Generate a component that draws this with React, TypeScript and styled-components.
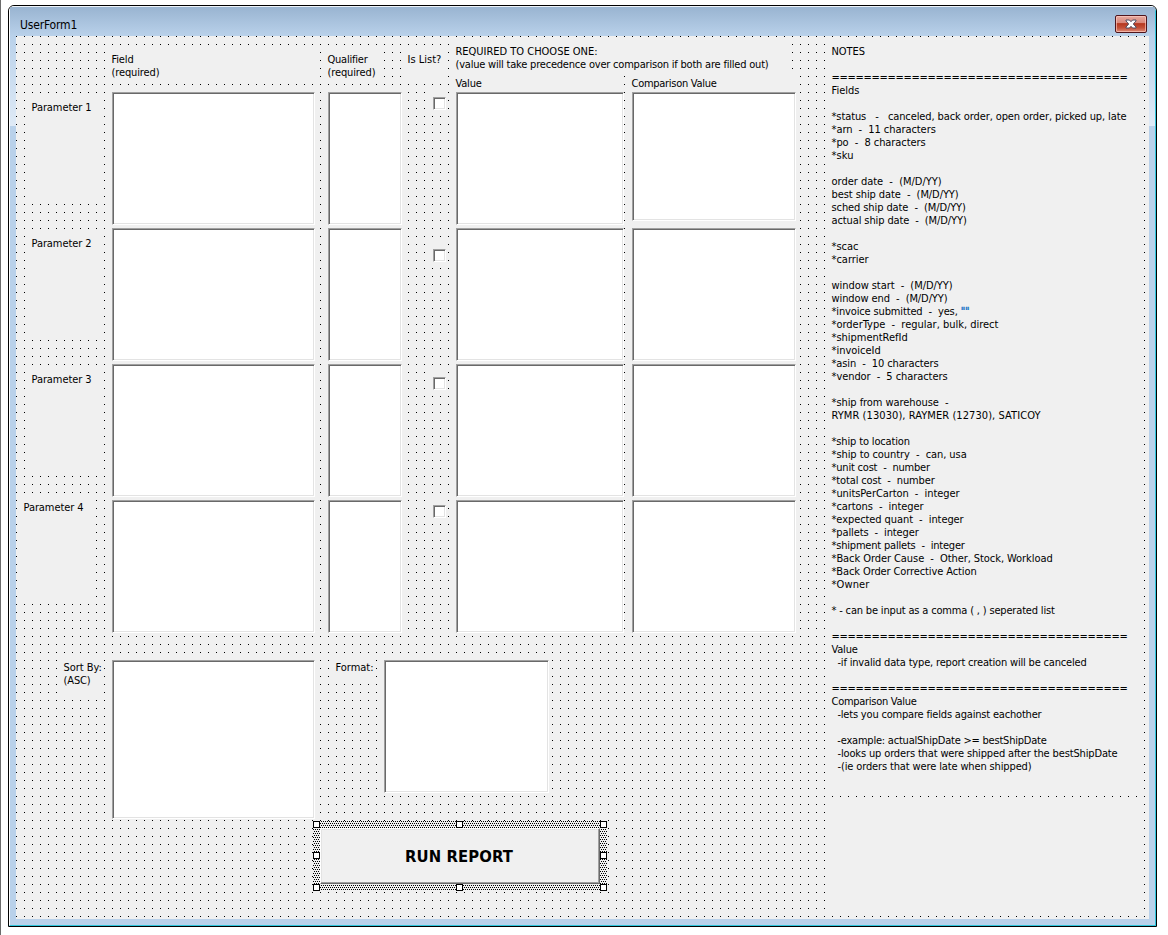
import React from "react";
import styled, { createGlobalStyle, css } from "styled-components";

const face = "#f0f0f0";
const frameBlue = "#b9d1ea";
const uiFont = '"DejaVu Sans Condensed", "DejaVu Sans", Tahoma, sans-serif';

const GlobalStyle = createGlobalStyle`
  *, *::before, *::after { box-sizing: border-box; }
  body { margin: 0; background: #fff; color: #000; font: 11px/13px ${uiFont}; }
`;

/* ---------- window chrome ---------- */

const Desktop = styled.main`
  display: flex;
  width: 1168px;
  height: 935px;
  padding: 5px 0 0 7px;
  border-left: 1px solid #6b6b6b;
`;

const WindowFrame = styled.section`
  width: 1149px;
  height: 922px;
  border: 1px solid #000;
  border-radius: 6px 6px 0 0;
  overflow: hidden;
`;

const WindowBevel = styled.div`
  display: flex;
  flex-direction: column;
  height: 100%;
  border: 1px solid;
  border-color: #eef4fa #2fc6dc #2fc6dc #fff;
  border-radius: 5px 5px 0 0;
  background: ${frameBlue};
`;

const TitleBar = styled.header`
  display: flex;
  justify-content: space-between;
  align-items: flex-start;
  flex: none;
  height: 29px;
  padding: 8px 8px 0 10px;
  background: linear-gradient(#99b4d1, ${frameBlue});
`;

const Title = styled.h1`
  margin: 3px 0 0;
  font-size: 12px;
  line-height: 14px;
  font-weight: 400;
  letter-spacing: -0.16px;
`;

const CloseButton = styled.button`
  display: grid;
  place-items: center;
  width: 32px;
  height: 18px;
  padding: 0;
  border: 1px solid #4f161d;
  border-radius: 2px;
  box-shadow: inset 0 0 0 1px rgba(255, 205, 195, 0.65);
  background: linear-gradient(#e5a99f 0, #d98578 46%, #b5371f 47%, #c4523a 75%, #de8d7a 100%);
`;

const FrameBody = styled.div`
  flex: 1;
  padding: 0 6px 6px;
  background: linear-gradient(${frameBlue}, #dfeaf6) 0 0 / 100% 90px no-repeat, ${frameBlue};
`;

/* ---------- design surface ---------- */

const Surface = styled.div`
  display: flex;
  height: 883px;
  background-color: ${face};
  background-image: linear-gradient(90deg, transparent 1px, ${face} 1px),
    linear-gradient(#000 1px, ${face} 1px);
  background-size: 8px 8px;
`;

const ControlsColumn = styled.div`
  width: 816px;
`;

const columns = css`
  display: grid;
  grid-template-columns: 96px 216px 80px 48px 176px 164px;
  justify-items: start;
  align-items: start;
`;

const HeaderRow = styled.div`
  ${columns}
  grid-template-rows: 32px 16px;
  padding-top: 8px;
`;

const ParameterRow = styled.div`
  ${columns}
  height: 136px;
`;

const Caption = styled.label<{ $w: number; $h: number; $top?: number; $left?: number }>`
  display: block;
  width: ${(p) => p.$w}px;
  height: ${(p) => p.$h}px;
  margin: ${(p) => p.$top ?? 0}px 0 0 ${(p) => p.$left ?? 0}px;
  padding-top: 1px;
  background: ${face};
`;

const TallCaption = styled(Caption)<{ $col: number }>`
  grid-area: 1 / ${(p) => p.$col} / 3;
`;

const RequirementCaption = styled(Caption)`
  grid-area: 1 / 5 / 2 / 7;
`;

const ColumnCaption = styled(Caption)<{ $col: number }>`
  grid-area: 2 / ${(p) => p.$col};
`;

const TextLine = styled.span<{ $track?: number }>`
  display: block;
  height: 13px;
  margin-left: -0.5px;
  white-space: pre;
  letter-spacing: ${(p) => p.$track ?? -0.08}px;
`;

const ListBox = styled.div<{ $w: number; $h?: number }>`
  flex: none;
  width: ${(p) => p.$w}px;
  height: ${(p) => p.$h ?? 133}px;
  border: 1px solid;
  border-color: #a0a0a0 #fff #fff #a0a0a0;
  box-shadow: inset 1px 1px 0 #696969, inset -1px -1px 0 #e3e3e3;
  background: #fff;
`;

const CheckControl = styled.div<{ $top: number }>`
  width: 16px;
  height: 24px;
  margin: ${(p) => p.$top}px 0 0 24px;
  padding: 5px 0 0 1px;
  background: ${face};
`;

const CheckSquare = styled.div`
  width: 13px;
  height: 13px;
  border: 1px solid;
  border-color: #a0a0a0 #fff #fff #a0a0a0;
  box-shadow: inset 1px 1px 0 #696969, inset -1px -1px 0 #e3e3e3;
  background: #fff;
`;

const OptionsRow = styled.div`
  display: flex;
  align-items: flex-start;
  height: 159px;
  margin-top: 24px;
  padding-left: 48px;
`;

const ListSlot = styled.div`
  margin-left: 8px;
`;

/* ---------- selected command button ---------- */

const stipple = "conic-gradient(from 0deg at 1px 1px, transparent 270deg, #000 270deg)";

const Selection = styled.div`
  position: relative;
  width: 294px;
  height: 70px;
  margin: 2px 0 0 297px;
  padding: 7px;
  background: ${stipple} 0 0 / 2px 4px, ${stipple} 1px 2px / 2px 4px, ${face};
`;

const RunButton = styled.button`
  display: grid;
  place-items: center;
  width: 280px;
  height: 56px;
  padding: 2px 2px 0 0;
  border: 1px solid;
  border-color: #fff #696969 #696969 #fff;
  box-shadow: inset -1px -1px 0 #a0a0a0, inset 1px 1px 0 #e3e3e3;
  background: ${face};
  color: #000;
  font: 700 16.5px/20px ${uiFont};
  letter-spacing: 0.12px;
`;

const Handle = styled.i<{ $x: number; $y: number }>`
  position: absolute;
  left: ${(p) => p.$x}px;
  top: ${(p) => p.$y}px;
  width: 7px;
  height: 7px;
  border: 1px solid #000;
  background: #fff;
`;

/* ---------- notes ---------- */

const NotesColumn = styled.aside`
  display: flex;
  flex-direction: column;
  gap: 4px;
  width: 312px;
  padding-top: 8px;
`;

const NotesPanel = styled.div`
  height: 752px;
  padding-top: 1px;
  background: ${face};
`;

const EmptyPanel = styled.div`
  height: 112px;
  background: ${face};
`;

const Quotes = styled.span`
  color: #1b78c8;
  -webkit-text-stroke: 0.4px #1b78c8;
`;

type Note = [text: string, track?: number];

const rule: Note = ["=====================================", -0.293];
const blank: Note = [""];

const notes: Note[] = [
  ["NOTES", -0.05],
  blank,
  rule,
  ["Fields", 0.01],
  blank,
  ["*status   -   canceled, back order, open order, picked up, late", -0.1],
  ["*arn  -  11 characters", -0.06],
  ["*po  -  8 characters", -0.06],
  ["*sku", 0.1],
  blank,
  ["order date  -  (M/D/YY)", -0.02],
  ["best ship date  -  (M/D/YY)", -0.08],
  ["sched ship date  -  (M/D/YY)", -0.1],
  ["actual ship date  -  (M/D/YY)", -0.11],
  blank,
  ["*scac", 0],
  ["*carrier", -0.02],
  blank,
  ["window start  -  (M/D/YY)", -0.06],
  ["window end  -  (M/D/YY)", -0.09],
  ['*invoice submitted  -  yes, ""', -0.14],
  ["*orderType  -  regular, bulk, direct", -0.01],
  ["*shipmentRefId", -0.02],
  ["*invoiceId", -0.02],
  ["*asin  -  10 characters", -0.11],
  ["*vendor  -  5 characters", -0.07],
  blank,
  ["*ship from warehouse  -", -0.065],
  ["RYMR (13030), RAYMER (12730), SATICOY", 0.07],
  blank,
  ["*ship to location", -0.15],
  ["*ship to country  -  can, usa", -0.07],
  ["*unit cost  -  number", -0.2],
  ["*total cost  -  number", -0.13],
  ["*unitsPerCarton  -  integer", -0.07],
  ["*cartons  -  integer", -0.07],
  ["*expected quant  -  integer", -0.08],
  ["*pallets  -  integer", -0.12],
  ["*shipment pallets  -  integer", -0.2],
  ["*Back Order Cause  -  Other, Stock, Workload", -0.07],
  ["*Back Order Corrective Action", -0.11],
  ["*Owner", 0.1],
  blank,
  ["* - can be input as a comma ( , ) seperated list", -0.17],
  blank,
  rule,
  ["Value", -0.2],
  ["  -if invalid data type, report creation will be canceled", -0.177],
  blank,
  rule,
  ["Comparison Value", -0.28],
  ["  -lets you compare fields against eachother", -0.188],
  blank,
  ["  -example: actualShipDate >= bestShipDate", -0.215],
  ["  -looks up orders that were shipped after the bestShipDate", -0.143],
  ["  -(ie orders that were late when shipped)", -0.134],
];

interface ParameterLayout {
  name: string;
  labelTop: number;
  labelLeft: number;
  checkTop: number;
  comparisonHeight?: number;
}

const parameters: ParameterLayout[] = [
  { name: "Parameter 1", labelTop: 8, labelLeft: 16, checkTop: 0, comparisonHeight: 129 },
  { name: "Parameter 2", labelTop: 8, labelLeft: 16, checkTop: 16 },
  { name: "Parameter 3", labelTop: 8, labelLeft: 16, checkTop: 8 },
  { name: "Parameter 4", labelTop: 0, labelLeft: 8, checkTop: 0 },
];

const handles = [
  [0, 0], [143, 0], [287, 0],
  [0, 31], [287, 31],
  [0, 63], [143, 63], [287, 63],
];

function NoteText({ text }: { text: string }) {
  if (!text.endsWith('""')) return <>{text}</>;
  return (
    <>
      {text.slice(0, -2)}
      <Quotes>""</Quotes>
    </>
  );
}

function CloseGlyph() {
  return (
    <svg width="12" height="10" viewBox="0 0 12 10" aria-hidden="true">
      <path
        d="M1 1h3.400L6 2.700 7.600 1H11v1L8.300 5 11 8v1H7.600L6 7.300 4.400 9H1V8l2.700-3L1 2z"
        fill="#fff"
        stroke="#4d4f63"
        strokeWidth="1"
        strokeLinejoin="round"
      />
    </svg>
  );
}

export default function App() {
  return (
    <>
      <GlobalStyle />
      <Desktop>
        <WindowFrame>
          <WindowBevel>
            <TitleBar>
              <Title>UserForm1</Title>
              <CloseButton aria-label="Close">
                <CloseGlyph />
              </CloseButton>
            </TitleBar>
            <FrameBody>
              <Surface>
                <ControlsColumn>
                  <HeaderRow>
                    <TallCaption $col={2} $w={208} $h={32} $top={8}>
                      <TextLine $track={-0.15}>Field</TextLine>
                      <TextLine $track={-0.12}>(required)</TextLine>
                    </TallCaption>
                    <TallCaption $col={3} $w={56} $h={32} $top={8}>
                      <TextLine $track={-0.22}>Qualifier</TextLine>
                      <TextLine $track={-0.12}>(required)</TextLine>
                    </TallCaption>
                    <TallCaption $col={4} $w={40} $h={32} $top={8}>
                      <TextLine $track={0}>Is List?</TextLine>
                    </TallCaption>
                    <RequirementCaption $w={332} $h={32}>
                      <TextLine $track={-0.015}>REQUIRED TO CHOOSE ONE:</TextLine>
                      <TextLine $track={-0.204}>
                        (value will take precedence over comparison if both are filled out)
                      </TextLine>
                    </RequirementCaption>
                    <ColumnCaption $col={5} $w={164} $h={16}>
                      <TextLine $track={-0.2}>Value</TextLine>
                    </ColumnCaption>
                    <ColumnCaption $col={6} $w={164} $h={16}>
                      <TextLine $track={-0.28}>Comparison Value</TextLine>
                    </ColumnCaption>
                  </HeaderRow>

                  {parameters.map((p) => (
                    <ParameterRow key={p.name}>
                      <Caption $w={72} $h={100} $top={p.labelTop} $left={p.labelLeft}>
                        <TextLine $track={-0.08}>{p.name}</TextLine>
                      </Caption>
                      <ListBox $w={203} />
                      <ListBox $w={74} />
                      <CheckControl $top={p.checkTop}>
                        <CheckSquare />
                      </CheckControl>
                      <ListBox $w={168} />
                      <ListBox $w={164} $h={p.comparisonHeight} />
                    </ParameterRow>
                  ))}

                  <OptionsRow>
                    <Caption $w={40} $h={40}>
                      <TextLine $track={-0.03}>Sort By:</TextLine>
                      <TextLine $track={-0.12}>(ASC)</TextLine>
                    </Caption>
                    <ListSlot>
                      <ListBox $w={203} $h={159} />
                    </ListSlot>
                    <Caption $w={40} $h={23} $left={21}>
                      <TextLine $track={-0.02}>Format:</TextLine>
                    </Caption>
                    <ListSlot>
                      <ListBox $w={165} />
                    </ListSlot>
                  </OptionsRow>

                  <Selection>
                    <RunButton>RUN REPORT</RunButton>
                    {handles.map(([x, y]) => (
                      <Handle key={`${x}-${y}`} $x={x} $y={y} />
                    ))}
                  </Selection>
                </ControlsColumn>

                <NotesColumn>
                  <NotesPanel>
                    {notes.map(([text, track], i) => (
                      <TextLine key={i} $track={track}>
                        <NoteText text={text} />
                      </TextLine>
                    ))}
                  </NotesPanel>
                  <EmptyPanel />
                </NotesColumn>
              </Surface>
            </FrameBody>
          </WindowBevel>
        </WindowFrame>
      </Desktop>
    </>
  );
}
